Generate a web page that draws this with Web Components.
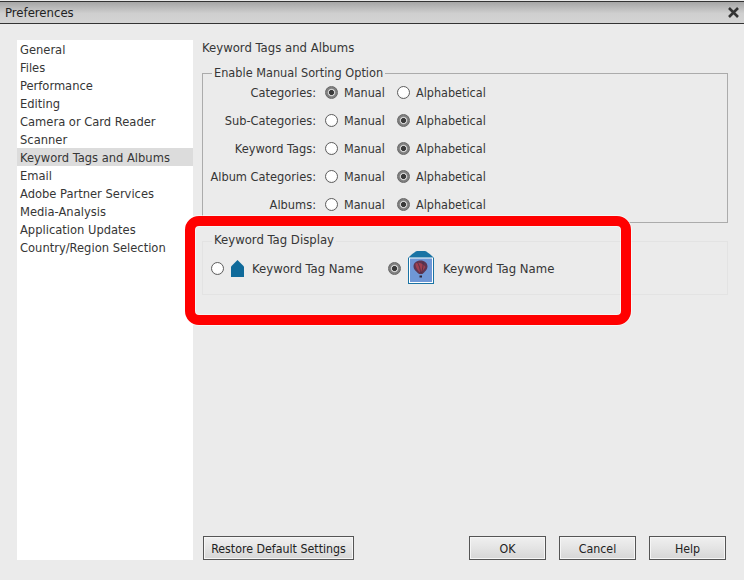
<!DOCTYPE html>
<html lang="en"><head><meta charset="utf-8"><title>Preferences</title>
<style>
html,body{margin:0;padding:0;background:#ebebeb}
body{width:744px;height:580px;overflow:hidden;font-family:"DejaVu Sans",Tahoma,sans-serif;font-stretch:condensed;font-size:12.5px;color:#363636}
</style></head><body>
<pref-dialog>
  <pref-title slot="title">Preferences</pref-title>
  <pref-sidebar slot="side">
    <pref-item>General</pref-item><pref-item>Files</pref-item><pref-item>Performance</pref-item><pref-item>Editing</pref-item><pref-item>Camera or Card Reader</pref-item><pref-item>Scanner</pref-item><pref-item selected>Keyword Tags and Albums</pref-item><pref-item>Email</pref-item><pref-item>Adobe Partner Services</pref-item><pref-item>Media-Analysis</pref-item><pref-item>Application Updates</pref-item><pref-item>Country/Region Selection</pref-item>
  </pref-sidebar>
  <pref-heading slot="main">Keyword Tags and Albums</pref-heading>
  <pref-group slot="main" legend="Enable Manual Sorting Option">
    <sort-row label="Categories:" value="manual"></sort-row>
    <sort-row label="Sub-Categories:" value="alpha"></sort-row>
    <sort-row label="Keyword Tags:" value="alpha"></sort-row>
    <sort-row label="Album Categories:" value="alpha"></sort-row>
    <sort-row label="Albums:" value="alpha"></sort-row>
  </pref-group>
  <tag-display slot="main" legend="Keyword Tag Display"></tag-display>
  <pref-button slot="left" wide>Restore Default Settings</pref-button>
  <pref-button slot="right">OK</pref-button>
  <pref-button slot="right">Cancel</pref-button>
  <pref-button slot="right">Help</pref-button>
</pref-dialog>
<script>
function def(name,html,init){
  customElements.define(name,class extends HTMLElement{
    constructor(){super();this.attachShadow({mode:"open"}).innerHTML=html;}
    connectedCallback(){if(init)init.call(this,this.shadowRoot);}
  });
}
def("pref-dialog",`<style>
:host{display:block;position:relative;width:744px;height:580px}
.top{height:1px;background:#e8e8e8}
.body{display:flex;height:516px;padding:16px 17px 20px 17px;gap:9px}
.col{flex:1;display:flex;flex-direction:column;min-width:0;height:520px}
.content{flex:1;display:flex;flex-direction:column}
.foot{display:flex;justify-content:space-between;padding-right:1px;margin-left:1px}
.btns{display:flex;gap:13px}
.hl{position:absolute;left:185px;top:216px;width:446px;height:109px;box-sizing:border-box;border:10px solid #ff0000;border-radius:14px;box-shadow:0 0 0 1px rgba(255,255,255,.55),inset 0 0 0 1px rgba(255,255,255,.45);pointer-events:none}
</style>
<div class="top"></div>
<slot name="title"></slot>
<div class="body"><slot name="side"></slot>
<div class="col"><div class="content"><slot name="main"></slot></div>
<div class="foot"><slot name="left"></slot><div class="btns"><slot name="right"></slot></div></div></div></div>
<div class="hl"></div>`);
def("pref-title",`<style>
:host{display:flex;align-items:center;justify-content:space-between;box-sizing:border-box;height:23px;border-top:1px solid #333;border-bottom:1px solid #333;background:linear-gradient(#a6a6a6,#cfcfcf 55%,#d4d4d4);padding:0 4px 0 5px;color:#222;font-size:13px}
svg{display:block}
</style><span><slot></slot></span><svg width="13" height="13" viewBox="0 0 13 13"><path d="M2 2 11 11M11 2 2 11" stroke="#333" stroke-width="2.6" fill="none"/></svg>`);
def("pref-sidebar",`<style>
:host{display:block;flex:none;width:176px;height:520px;background:#fff;font-size:12.8px}
</style><slot></slot>`);
def("pref-item",`<style>
:host{display:block;height:18px;line-height:18px;padding-left:3px}
.t{display:block;position:relative;top:1px}
:host([selected]){background:#dcdcdc}
</style><span class="t"><slot></slot></span>`);
def("pref-heading",`<style>
:host{display:block;height:24px;line-height:16px;box-sizing:border-box;font-size:13px}
</style><slot></slot>`);
const grp=`fieldset{margin:0;padding:0;border:1px solid #ababab;height:100%;box-sizing:border-box;min-width:0}
legend{margin-left:9px;padding:0 2px;height:18px;line-height:18px;box-sizing:border-box}`;
def("pref-group",`<style>
:host{display:block;width:526px;height:159px;flex:none}
${grp}
legend{font-size:12.6px}
.rows{display:flex;flex-direction:column;margin-top:-4px}
</style><fieldset><legend></legend><div class="rows"><slot></slot></div></fieldset>`,function(r){r.querySelector("legend").textContent=this.getAttribute("legend");});
def("pref-radio",`<style>
:host{display:block;flex:none;width:13px;height:13px;box-sizing:border-box;border-radius:50%;border:1px solid #5e5e5e;background:radial-gradient(circle at 50% 40%,#fff 55%,#e2e2e2);}
:host([checked]){background:radial-gradient(circle,#3a3a3a 0 2.2px,#d0d0d0 2.8px 3.2px,#808080 4.2px);border-color:#666}
</style>`);
def("sort-row",`<style>
:host{display:flex;align-items:center;height:28px}
.l{width:113px;text-align:right;margin-right:9px;font-size:12.7px}
.a{margin-left:6px;width:47px}
.b{margin-left:6px}
</style><span class="l"></span><pref-radio class="m"></pref-radio><span class="a">Manual</span><pref-radio class="p" style="margin-left:6px"></pref-radio><span class="b">Alphabetical</span>`,function(r){
  r.querySelector(".l").textContent=this.getAttribute("label");
  r.querySelector(this.getAttribute("value")=="manual"?".m":".p").setAttribute("checked","");
});
def("tag-display",`<style>
:host{display:block;width:526px;height:63px;margin-top:9px;flex:none;font-size:13px}
${grp}
fieldset{border-color:#e3e3e3}
legend{position:relative;top:-1px;font-size:13px}
.row{display:flex;align-items:center;height:36px;padding-left:8px}
.t1{margin-left:8px;width:136px}
.t2{margin-left:9px}
svg{display:block;flex:none}
.i1{margin-left:7px}
.i2{margin-left:7px}
</style><fieldset><legend></legend><div class="row">
<pref-radio></pref-radio>
<svg class="i1" width="13" height="17" viewBox="0 0 13 17"><path d="M0 17V6.500L6.500 0 13 6.500V17Z" fill="#0f6a9a"/></svg>
<span class="t1">Keyword Tag Name</span>
<pref-radio checked></pref-radio>
<svg class="i2" width="26" height="34" viewBox="0 0 26 34"><path d="M0 33V7Q6 1 9 0H17Q20 1 26 7V33Z" fill="#1a73a4"/><rect x="1" y="6.500" width="24" height="25.500" fill="#fff"/><rect x="2" y="7.500" width="22" height="23.500" fill="#6f97d6"/><path d="M12.500 9.500C16.500 9.500 19.500 12 19.500 15.500C19.500 18.500 16.500 21 14.500 23H11C9 21 5.500 18.500 5.500 15.500C5.500 12 8.500 9.500 12.500 9.500Z" fill="#5e3550"/><path d="M7.500 12.500C10 11 14.500 12 17.500 16C16 18.500 14 20.500 12.500 22C10 20 7 16 7.500 12.500Z" fill="#a0404f"/><path d="M9.500 11.500C11 14 12.500 18 12.500 22M15 11C15.500 14 14.500 18 13.500 22" stroke="#4a2c46" stroke-width=".8" fill="none"/><rect x="11.500" y="24.500" width="2.500" height="2" fill="#2e2436"/></svg>
<span class="t2">Keyword Tag Name</span>
</div></fieldset>`,function(r){r.querySelector("legend").textContent=this.getAttribute("legend");});
def("pref-button",`<style>
:host{display:flex;align-items:center;justify-content:center;box-sizing:border-box;width:77px;height:24px;border:1px solid #555;background:linear-gradient(#f0f0f0,#e4e4e4 50%,#d6d6d6);box-shadow:inset 0 0 0 1px #f6f6f6;color:#222;font-size:12.3px;padding-top:1px}
:host([wide]){width:151px}
</style><slot></slot>`);
</script>
</body></html>
